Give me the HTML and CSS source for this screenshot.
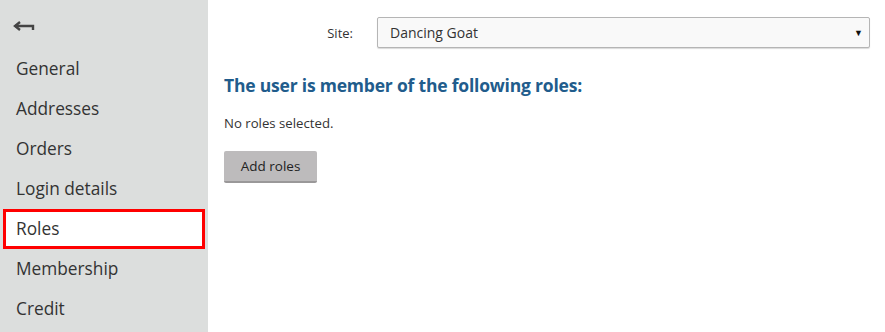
FILE: index.html
```html
<!DOCTYPE html>
<html lang="en">
  <head>
    <meta charset="UTF-8" />
    <meta name="viewport" content="width=device-width, initial-scale=1.0" />
    <title>User roles</title>
    <link rel="stylesheet" href="styles.css">
  </head>
  <body>
    <div class="layout">
      <div class="sidebar">
        <div class="back">
          <svg width="22" height="12" viewBox="0 0 22 12">
            <path d="M7 1 L2 5 L7 9" fill="none" stroke="#444" stroke-width="2.4" />
            <path d="M2 5 H20 V9" fill="none" stroke="#444" stroke-width="2.4" />
          </svg>
        </div>
        <ul class="menu">
          <li>General</li>
          <li>Addresses</li>
          <li>Orders</li>
          <li>Login details</li>
          <li class="active">Roles</li>
          <li>Membership</li>
          <li>Credit</li>
        </ul>
      </div>
      <div class="content">
        <div class="field">
          <label class="field-label">Site:</label>
          <div class="select">
            <span>Dancing Goat</span>
            <span class="caret">▼</span>
          </div>
        </div>
        <h2 class="heading">The user is member of the following roles:</h2>
        <p class="empty">No roles selected.</p>
        <button class="btn">Add roles</button>
      </div>
    </div>
  </body>
</html>
```

FILE: styles.css
```css
body {
  margin: 0;
  font-family: "Open Sans", "Noto Sans", sans-serif;
  color: #333;
  background: #fff;
}
.layout {
  display: flex;
  height: 332px;
}
.sidebar {
  width: 208px;
  background: #dcdedd;
  flex-shrink: 0;
}
.back {
  height: 49px;
  padding: 16px 0 0 13px;
  box-sizing: border-box;
}
.menu {
  list-style: none;
  margin: 0;
  padding: 0;
}
.menu li {
  height: 40px;
  line-height: 40px;
  padding-left: 16px;
  font-size: 17.3px;
  color: #333;
}
.menu li.active {
  background: #fff;
  margin: 0 3px;
  padding-left: 10px;
  border: 3px solid #f00;
  height: 34px;
  line-height: 34px;
}
.content {
  flex: 1;
  padding: 17px 15px 0 16px;
}
.field {
  display: flex;
  align-items: center;
}
.field-label {
  width: 153px;
  text-align: right;
  padding-right: 24px;
  font-size: 13px;
  box-sizing: border-box;
}
.select {
  flex: 1;
  height: 31px;
  border: 1px solid #b5b5b5;
  border-radius: 2px;
  background: #f9f9f9;
  box-sizing: border-box;
  display: flex;
  align-items: center;
  justify-content: space-between;
  padding: 0 6px 0 12px;
  font-size: 14px;
  color: #333;
  box-shadow: 0 1px 1px rgba(0, 0, 0, 0.15);
}
.caret {
  font-size: 9px;
  color: #111;
}
.heading {
  margin: 25px 0 0;
  font-size: 17.5px;
  font-weight: 700;
  color: #215c8c;
  letter-spacing: -0.2px;
}
.empty {
  margin: 17px 0 0;
  font-size: 13.2px;
}
.btn {
  margin-top: 19px;
  width: 93px;
  height: 32px;
  border: none;
  border-radius: 2px;
  background: #bdbbbc;
  border-bottom: 2px solid #9a9899;
  font-family: inherit;
  font-size: 13.5px;
  color: #222;
  cursor: pointer;
}
```
